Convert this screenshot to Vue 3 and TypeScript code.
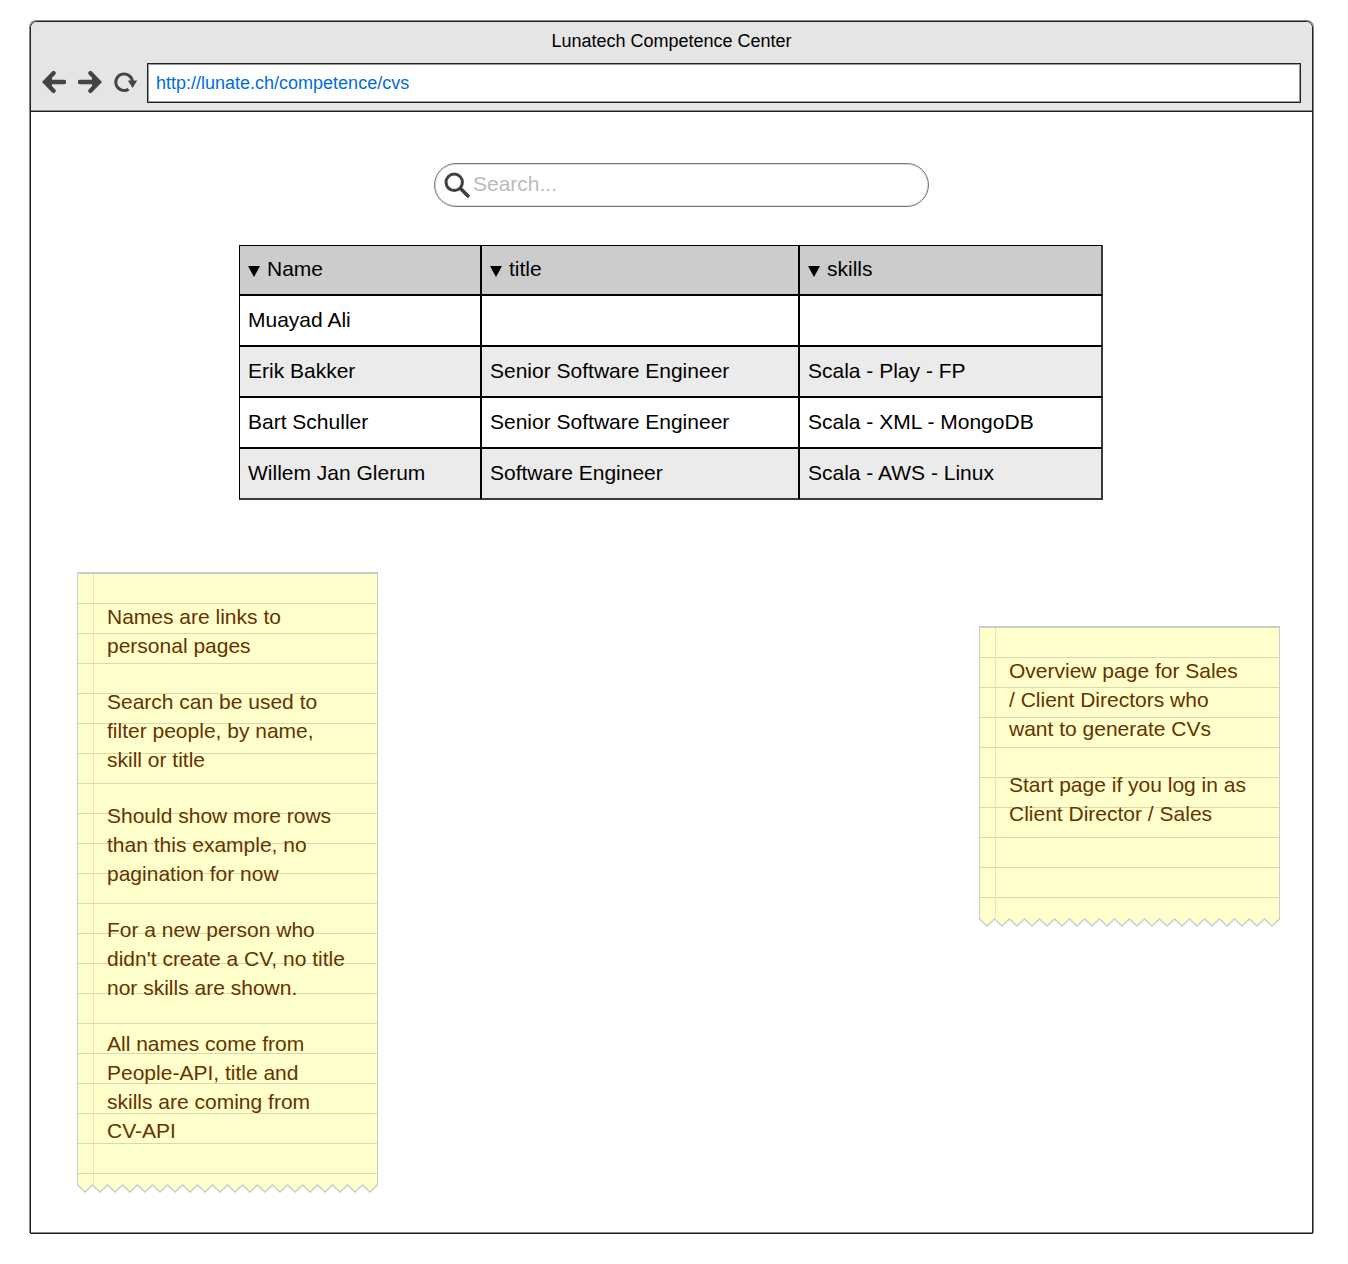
<script setup lang="ts">
import { computed, ref } from 'vue'

interface Person {
  name: string
  title: string
  skills: string[]
}

const columns = ['Name', 'title', 'skills']

const people: Person[] = [
  { name: 'Muayad Ali', title: '', skills: [] },
  { name: 'Erik Bakker', title: 'Senior Software Engineer', skills: ['Scala', 'Play', 'FP'] },
  { name: 'Bart Schuller', title: 'Senior Software Engineer', skills: ['Scala', 'XML', 'MongoDB'] },
  { name: 'Willem Jan Glerum', title: 'Software Engineer', skills: ['Scala', 'AWS', 'Linux'] },
]

const notes: string[][] = [
  [
    'Names are links to personal pages',
    'Search can be used to filter people, by name, skill or title',
    'Should show more rows than this example, no pagination for now',
    "For a new person who didn't create a CV, no title nor skills are shown.",
    'All names come from People-API, title and skills are coming from CV-API',
  ],
  [
    'Overview page for Sales / Client Directors who want to generate CVs',
    'Start page if you log in as Client Director / Sales',
  ],
]

const address = ref('http://lunate.ch/competence/cvs')
const query = ref('')

const rows = computed(() => {
  const q = query.value.trim().toLowerCase()
  return people.filter((p) => [p.name, p.title, ...p.skills].join(' ').toLowerCase().includes(q))
})

// Torn paper edge: twenty teeth, 15px wide and 7px deep
const teeth = Array.from({ length: 20 }, (_, i) => `L${i * 15 + 8} 8L${i * 15 + 15.5} 1`).join('')
const edge = `M0.5 0V1${teeth}V0`
</script>

<template>
  <div class="page">
    <div class="window">
      <header class="chrome">
        <h1 class="caption">Lunatech Competence Center</h1>
        <div class="toolbar">
          <button type="button" class="tool" aria-label="Back">
            <svg width="24" height="24" viewBox="0 0 24 24">
              <path d="M11.5 3.2L3 12L11.5 20.8M4 12H22" fill="none" stroke="#444" stroke-width="4.4" stroke-linecap="round" stroke-linejoin="miter" />
              <path d="M2 12L10 5V19Z" fill="#444" />
            </svg>
          </button>
          <button type="button" class="tool" aria-label="Forward">
            <svg width="24" height="24" viewBox="0 0 24 24">
              <path d="M12.5 3.2L21 12L12.5 20.8M20 12H2" fill="none" stroke="#444" stroke-width="4.4" stroke-linecap="round" stroke-linejoin="miter" />
              <path d="M22 12L14 5V19Z" fill="#444" />
            </svg>
          </button>
          <button type="button" class="tool" aria-label="Reload">
            <svg width="24" height="24" viewBox="0 0 24 24">
              <path d="M18.4 11.5A8.3 8.3 0 1 0 14.6 19.2" fill="none" stroke="#444" stroke-width="3" />
              <path d="M13.8 10.4H23.2L18.6 18Z" fill="#444" />
            </svg>
          </button>
          <input v-model="address" class="address" type="text" aria-label="Address" />
        </div>
      </header>

      <main>
        <section class="listing">
          <label class="search">
            <svg width="28" height="28" viewBox="0 0 28 28" aria-hidden="true">
              <circle cx="10.2" cy="11.3" r="8.2" fill="none" stroke="#404040" stroke-width="3" />
              <path d="M16 17L25 26" stroke="#404040" stroke-width="3.6" />
            </svg>
            <input v-model="query" type="text" placeholder="Search..." aria-label="Search" />
          </label>

          <table class="people">
            <colgroup>
              <col class="col-name" />
              <col class="col-title" />
              <col class="col-skills" />
            </colgroup>
            <thead>
              <tr>
                <th v-for="c in columns" :key="c" scope="col">
                  <button type="button" class="sort">
                    <svg width="12" height="12" viewBox="0 0 12 12" aria-hidden="true">
                      <path d="M0 1H12L6 12Z" />
                    </svg>
                    {{ c }}
                  </button>
                </th>
              </tr>
            </thead>
            <tbody>
              <tr v-for="p in rows" :key="p.name">
                <td><a href="#">{{ p.name }}</a></td>
                <td>{{ p.title }}</td>
                <td>{{ p.skills.join(' - ') }}</td>
              </tr>
            </tbody>
          </table>
        </section>

        <section class="notes">
          <aside v-for="(note, i) in notes" :key="i" class="note">
            <div class="paper">
              <p v-for="text in note" :key="text">{{ text }}</p>
            </div>
            <svg class="edge" width="301" height="9" viewBox="0 0 301 9" aria-hidden="true">
              <path :d="edge" fill="#ffffcc" stroke="#ccc" stroke-width="1.5" />
            </svg>
          </aside>
        </section>
      </main>
    </div>
  </div>
</template>

<style>
body {
  margin: 0;
  background: #fff;
}
</style>

<style scoped>
.page {
  padding: 21px 35px 30px 30px;
  font-family: "Liberation Sans", Arial, Helvetica, sans-serif;
  font-size: 21px;
  color: #000;
}

.window {
  border: 1px solid #222;
  border-radius: 7px 7px 0 0;
  box-shadow: -1px -1px 0 #888, 1px -1px 0 #888, inset 0 -1px 0 #888;
}

.chrome {
  background: #e5e5e5;
  border-bottom: 1px solid #222;
  border-radius: 6px 6px 0 0;
  box-shadow: inset 0 -1px 0 #888;
  padding-bottom: 8px;
}

.caption {
  margin: 0;
  font-size: 18px;
  font-weight: 400;
  line-height: 38px;
  text-align: center;
  padding-bottom: 3px;
}

.toolbar {
  display: flex;
  align-items: center;
  gap: 12px;
  padding: 0 11px;
}

.tool {
  display: flex;
  flex: none;
  padding: 0 0 2px;
  border: 0;
  background: none;
}

.address {
  flex: 1;
  min-width: 0;
  height: 40px;
  margin-left: -3px;
  box-sizing: border-box;
  padding: 0 8px;
  border: 1px solid #222;
  border-radius: 0;
  box-shadow: inset 0 0 0 1px #999;
  background: #fff;
  color: #006be0;
  font: inherit;
  font-size: 18px;
  outline: none;
}

.listing {
  max-width: 864px;
  margin: 0 auto;
  padding: 51px 1px 0 0;
}

.search {
  display: flex;
  align-items: center;
  box-sizing: border-box;
  max-width: 495px;
  height: 44px;
  margin: 0 174px 38px 195px;
  padding: 0 20px 0 9px;
  border: 1px solid #777;
  border-radius: 22px;
  box-shadow: inset 0 0 0 1px #ddd;
}

.search input {
  flex: 1;
  min-width: 0;
  padding: 0 0 2px 1px;
  border: 0;
  background: none;
  font: inherit;
  outline: none;
}

.search input::placeholder {
  color: #bbb;
  opacity: 1;
}

.people {
  width: 100%;
  table-layout: fixed;
  border-collapse: separate;
  border-spacing: 0;
}

.col-name {
  width: 242px;
}

.col-title {
  width: 318px;
}

.col-skills {
  width: 304px;
}

th,
td {
  box-sizing: border-box;
  height: 51px;
  padding: 0 8px 2px;
  border: 1px solid #000;
  text-align: left;
  font-weight: 400;
}

th {
  height: 50px;
  background: #ccc;
}

th:last-child,
td:last-child {
  border-right: 2px solid #3a3a3a;
}

tbody tr:last-child td {
  height: 52px;
  border-bottom: 2px solid #3a3a3a;
}

tbody tr:nth-child(even) {
  background: #ebebeb;
}

td a {
  color: inherit;
  text-decoration: none;
}

.sort {
  display: flex;
  align-items: center;
  gap: 7px;
  padding: 0;
  border: 0;
  background: none;
  color: inherit;
  font: inherit;
}

.sort svg {
  margin-top: 4px;
}

.notes {
  display: flex;
  justify-content: space-between;
  align-items: flex-start;
  padding: 72px 32px 40px 46px;
}

.note {
  width: 301px;
}

.note + .note {
  margin-top: 54px;
}

.paper {
  box-sizing: border-box;
  min-height: 292px;
  padding: 28px 30px 39px 29px;
  border: 1px solid #ccc;
  border-top-width: 2px;
  border-bottom: 0;
  background:
    linear-gradient(#ffdcaa, #ffdcaa) 15px 0 / 1px 100% no-repeat,
    repeating-linear-gradient(#ffffcc 0 29px, #d8d8b4 29px 30px);
  color: #630;
}

.paper p {
  margin: 0 0 27px;
  line-height: 29px;
}

.paper p:last-child {
  margin-bottom: 0;
}

.edge {
  display: block;
}
</style>
